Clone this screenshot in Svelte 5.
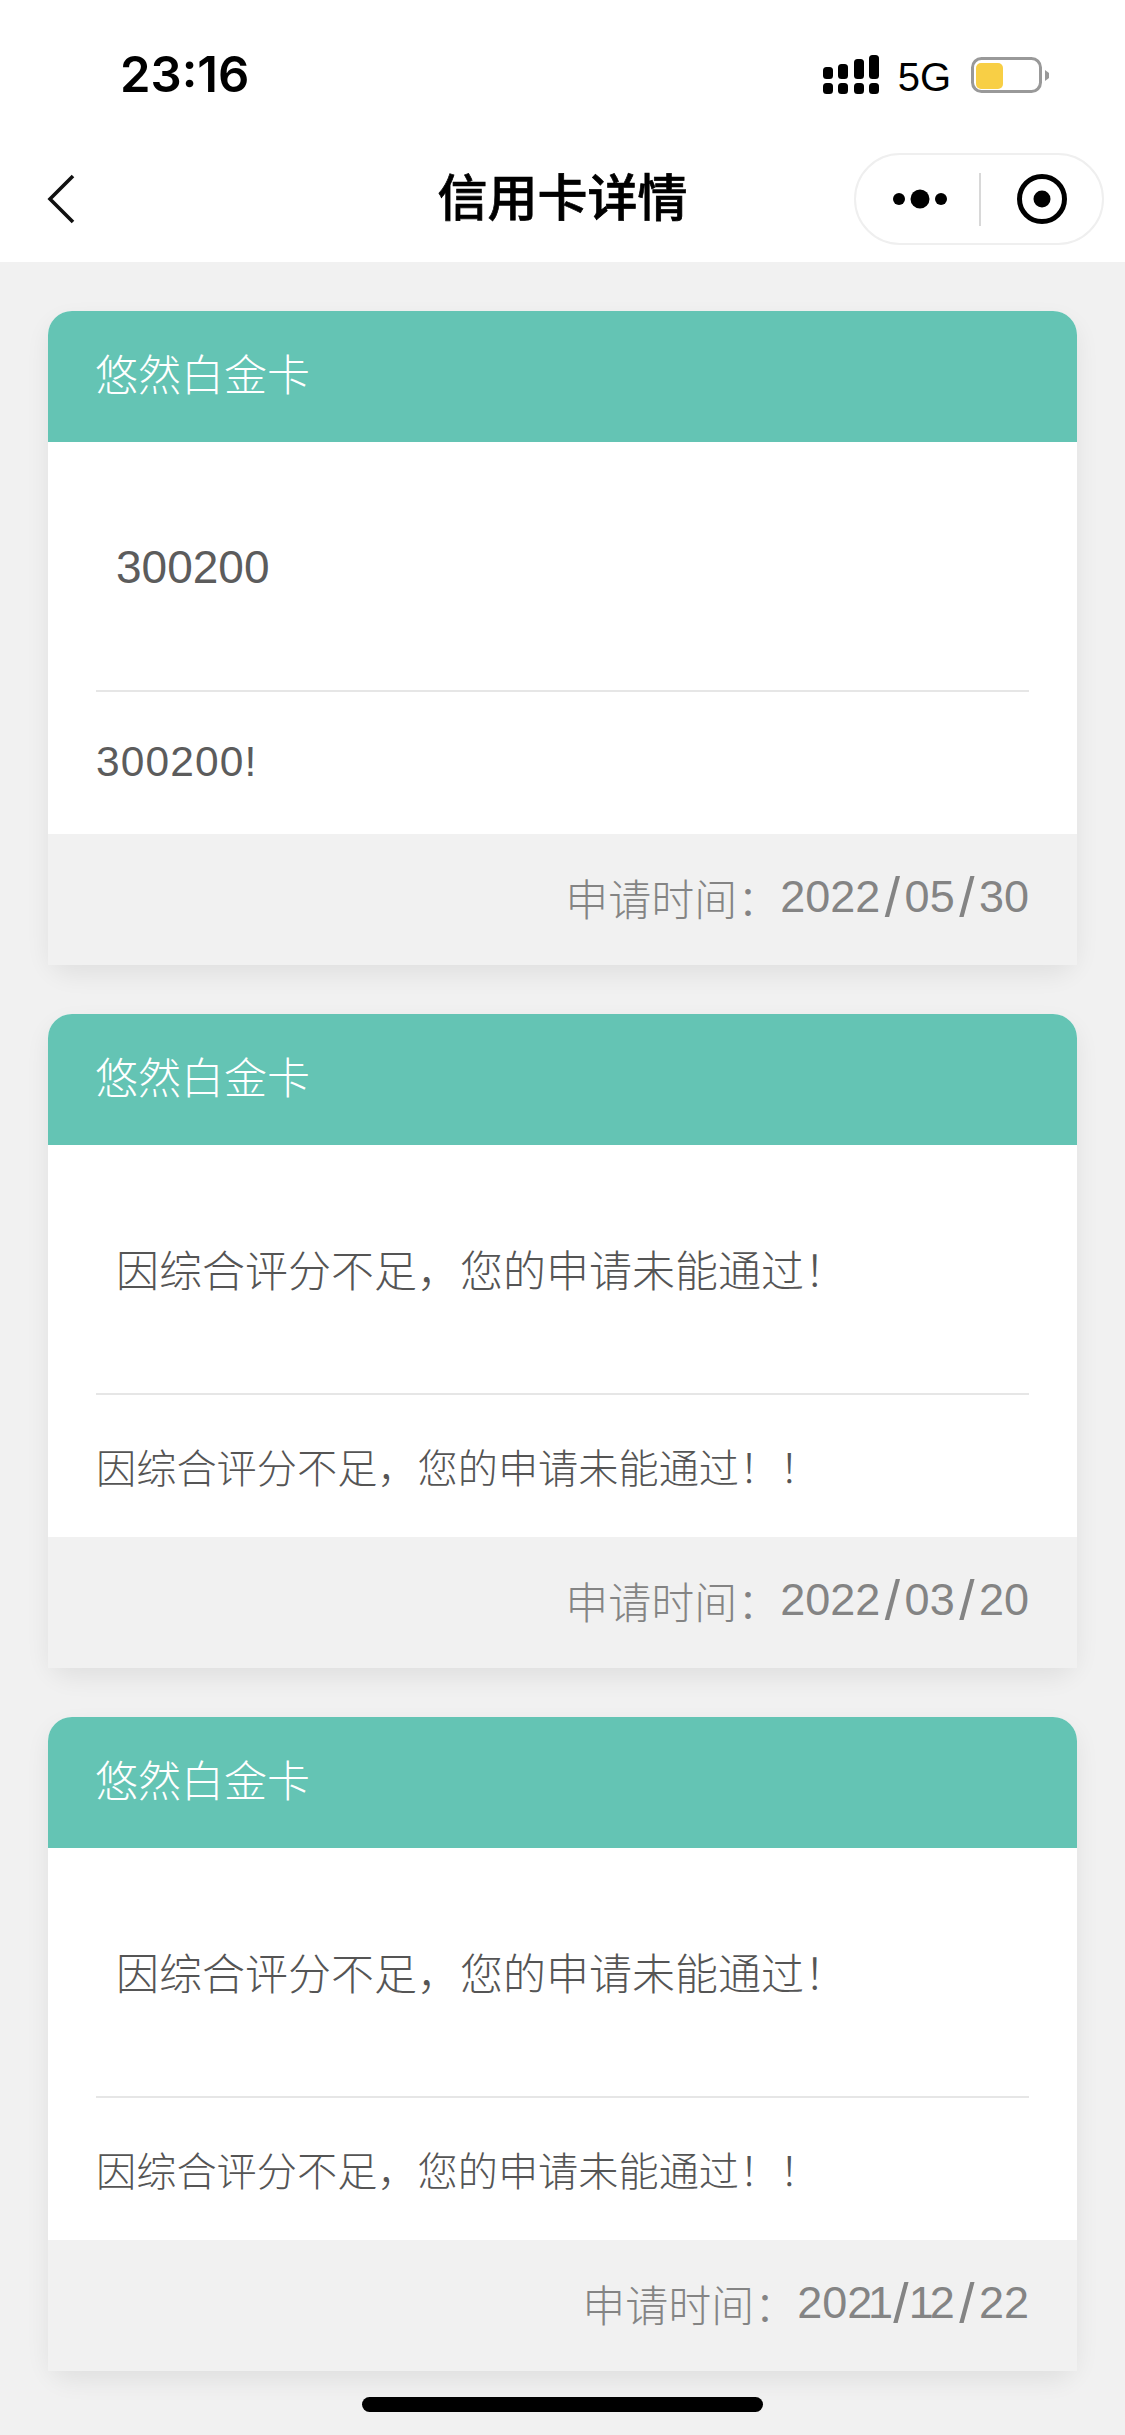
<script>
  const cards = [
    { title: '悠然白金卡', result: '300200', latin: true, note: '300200!', date: '2022/05/30' },
    { title: '悠然白金卡', result: '因综合评分不足，您的申请未能通过！', note: '因综合评分不足，您的申请未能通过！！', date: '2022/03/20' },
    { title: '悠然白金卡', result: '因综合评分不足，您的申请未能通过！', note: '因综合评分不足，您的申请未能通过！！', date: '2021/12/22' }
  ];
</script>

<div class="page">
  <header class="top">
    <div class="status">
      <span class="time">23:16</span>
      <div class="status-right">
        <svg class="signal" width="56" height="40" viewBox="0 0 56 40" fill="#000">
          <rect x="0" y="12" width="10" height="12" rx="3.5" />
          <rect x="15" y="9" width="10" height="15" rx="3.5" />
          <rect x="31" y="4" width="10" height="20" rx="3.5" />
          <rect x="46" y="0" width="10" height="24" rx="3.5" />
          <rect x="0" y="28" width="10" height="11" rx="3.5" />
          <rect x="15" y="28" width="10" height="11" rx="3.5" />
          <rect x="31" y="28" width="10" height="11" rx="3.5" />
          <rect x="46" y="28" width="10" height="11" rx="3.5" />
        </svg>
        <span class="net">5G</span>
        <svg class="battery" width="78" height="36" viewBox="0 0 78 36">
          <rect x="1.5" y="1.5" width="68" height="33" rx="9" fill="none" stroke="#999" stroke-width="3" />
          <rect x="5" y="6" width="27" height="26" rx="5" fill="#f8cf45" />
          <path d="M74 13 l4 3 v5 l-4 3z" fill="#999" />
        </svg>
      </div>
    </div>
    <nav class="nav">
      <svg class="back" width="28" height="50" viewBox="0 0 28 50">
        <path d="M26 2 L3 25 L26 48" fill="none" stroke="#111" stroke-width="3.6" />
      </svg>
      <h1>信用卡详情</h1>
      <div class="capsule">
        <svg class="more" width="62" height="20" viewBox="0 0 62 20" fill="#000">
          <circle cx="6" cy="10" r="6" />
          <circle cx="27" cy="10" r="9.5" />
          <circle cx="48" cy="10" r="6" />
        </svg>
        <span class="sep"></span>
        <svg class="target" width="50" height="50" viewBox="0 0 50 50">
          <circle cx="25" cy="25" r="22.5" fill="none" stroke="#000" stroke-width="5" />
          <circle cx="25" cy="25" r="8.5" fill="#000" />
        </svg>
      </div>
    </nav>
  </header>

  <main class="list">
    {#each cards as card}
      <section class="card">
        <div class="card-head">{card.title}</div>
        <div class="card-body">
          <div class="result" class:latin={card.latin}>{card.result}</div>
          <div class="note" class:latin={card.latin}>{card.note}</div>
        </div>
        <div class="card-foot">
          <span>申请时间：</span>
          <span class="date">
            {#each card.date.split('') as ch}<span class:slash={ch === '/'} class:one={ch === '1'}>{ch}</span>{/each}
          </span>
        </div>
      </section>
    {/each}
  </main>

  <div class="home-bar"></div>
</div>

<style>
  :global(body) {
    background: #f1f1f1;
  }

  .page {
    position: relative;
    height: 2435px;
    overflow: hidden;
    background: #f1f1f1;
    font-family: "Liberation Sans", "Noto Sans CJK SC", sans-serif;
  }

  .top {
    background: #fff;
    height: 262px;
  }

  .status {
    height: 136px;
    display: flex;
    justify-content: space-between;
    align-items: flex-start;
    padding: 0 76px 0 120px;
  }

  .time {
    margin-top: 46px;
    font-family: Inter, "Liberation Sans", sans-serif;
    font-size: 49px;
    line-height: 58px;
    font-weight: 600;
    color: #000;
  }

  .status-right {
    display: flex;
    align-items: flex-start;
    margin-top: 55px;
  }

  .net {
    margin: 2px 20px 0 19px;
    font-size: 40px;
    line-height: 40px;
    color: #000;
  }

  .battery {
    margin-top: 2px;
  }

  .nav {
    height: 126px;
    display: grid;
    grid-template-columns: 1fr auto 1fr;
    align-items: center;
    padding: 0 21px;
  }

  .back {
    margin-left: 26px;
  }

  h1 {
    margin: 0;
    font-size: 50px;
    line-height: 60px;
    font-weight: 500;
    -webkit-text-stroke: 0.7px #000;
    color: #000;
  }

  .capsule {
    justify-self: end;
    box-sizing: border-box;
    width: 250px;
    height: 92px;
    border: 2px solid #efefef;
    border-radius: 46px;
    display: flex;
    align-items: center;
    padding-left: 37px;
  }

  .sep {
    width: 1.5px;
    height: 53px;
    margin: 0 36px 0 24px;
    background: #d8d8d8;
  }

  .list {
    display: flex;
    flex-direction: column;
    gap: 49px;
    padding: 49px 48px 0;
  }

  .card {
    border-radius: 24px;
    background: #fff;
    box-shadow: 0 10px 24px rgba(0, 0, 0, 0.07);
  }

  .card-head {
    height: 131px;
    box-sizing: border-box;
    padding: 0 47px 10px;
    display: flex;
    align-items: center;
    border-radius: 24px 24px 0 0;
    background: #64c4b4;
    color: #fff;
    font-size: 43px;
    font-weight: 300;
  }

  .card-body {
    padding: 0 48px;
    color: #555;
    font-size: 40.2px;
    font-weight: 300;
  }

  .result {
    height: 250px;
    box-sizing: border-box;
    padding: 0 0 2px 20px;
    display: flex;
    align-items: center;
    border-bottom: 2px solid #e6e6e6;
    font-size: 43px;
  }

  .note {
    height: 142px;
    box-sizing: border-box;
    padding-bottom: 2px;
    display: flex;
    align-items: center;
  }

  .result.latin {
    font-size: 46px;
    font-weight: 400;
    color: #5c5c5c;
    padding-top: 2px;
    padding-bottom: 0;
  }

  .note.latin {
    font-size: 42.5px;
    font-weight: 400;
    color: #5c5c5c;
    letter-spacing: 1.1px;
  }

  .card-foot {
    height: 131px;
    box-sizing: border-box;
    padding: 0 48px 6px;
    display: flex;
    justify-content: flex-end;
    align-items: center;
    background: #f1f1f1;
    color: #848484;
    font-size: 43px;
    font-weight: 300;
  }

  .date {
    font-size: 45px;
    font-weight: 400;
  }

  .slash {
    font-size: 55px;
    line-height: 0;
    margin: 0 4.5px;
    vertical-align: -4px;
  }

  .one {
    margin: 0 -4.25px;
  }

  .home-bar {
    position: absolute;
    left: 362px;
    top: 2397px;
    width: 401px;
    height: 15px;
    border-radius: 8px;
    background: #000;
  }
</style>
